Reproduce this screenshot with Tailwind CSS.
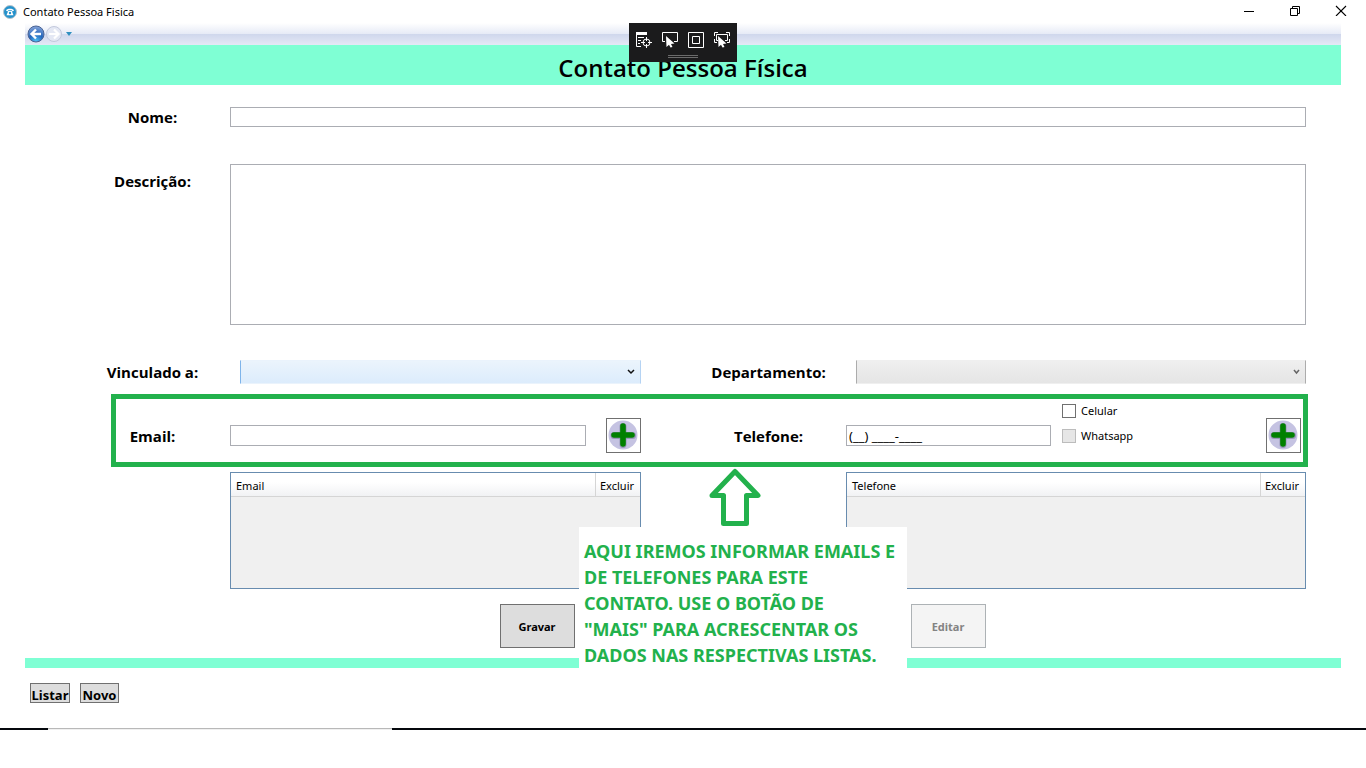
<!DOCTYPE html>
<html lang="pt-BR">
<head>
<meta charset="utf-8">
<title>Contato Pessoa Fisica</title>
<script src="https://cdn.jsdelivr.net/npm/@tailwindcss/browser@4"></script>
</head>
<body class="bg-white text-black text-[12px] leading-4 font-['Segoe_UI','Noto_Sans',sans-serif]">
<header class="flex h-[23px] items-center justify-between pr-[2px] pl-[3px]">
  <div class="flex items-center gap-[6px]">
    <svg width="14" height="14" viewBox="0 0 14 14" aria-hidden="true"><circle cx="7" cy="7" r="6.5" fill="#2492cc" stroke="#b8c4cc"/><path d="M3 5.5C3.500 3 10.500 3 11 5.500L9.500 6.500L8.500 5H5.500L4.500 6.500Z" fill="#fff"/><path d="M5.300 5.800H8.700L10.500 10.300H3.500Z" fill="#fff"/><circle cx="7" cy="8" r="1.200" fill="#2492cc"/></svg>
    <h1 class="text-[11px]">Contato Pessoa Fisica</h1>
  </div>
  <div class="flex h-5 items-start pt-[2px]">
    <button class="flex w-[46px] justify-center" aria-label="Minimizar"><svg width="12" height="12" fill="none" stroke="#000"><path d="M1 7.500H11"/></svg></button>
    <button class="flex w-[46px] justify-center" aria-label="Restaurar"><svg width="12" height="12" fill="none" stroke="#000"><path d="M1.500 4.500H8.500V11.500H1.500ZM3.500 4V2.500H10.500V9.500H9"/></svg></button>
    <button class="flex w-[46px] justify-center" aria-label="Fechar"><svg width="12" height="12" fill="none" stroke="#000" stroke-width="1.100"><path d="M1 2L11 12M11 2L1 12"/></svg></button>
  </div>
</header>

<main class="relative px-[25px]">
  <nav class="flex h-[22px] items-center bg-[linear-gradient(#ffffff_0px,#e6eaf6_11px,#cfd7ec_11px,#e5e8f6_22px)] pl-[2px]">
    <button aria-label="Voltar"><svg width="18" height="18" viewBox="0 0 18 18"><defs><radialGradient id="azul" cx=".5" cy=".95" r=".9"><stop offset="0" stop-color="#4fc0f5"/><stop offset=".5" stop-color="#2467bd"/><stop offset="1" stop-color="#7f9fd6"/></radialGradient></defs><circle cx="9" cy="9" r="8" fill="url(#azul)" stroke="#4a6494"/><path d="M14 9H5M9 4.500L4.500 9L9 13.500" fill="none" stroke="#fff" stroke-width="2.400"/></svg></button>
    <button aria-label="Avançar" disabled><svg width="18" height="18" viewBox="0 0 18 18"><circle cx="9" cy="9" r="7.500" fill="#e4e8f4" stroke="#c3c9dc"/><path d="M4 9H13M9 4.500L13.500 9L9 13.500" fill="none" stroke="#fff" stroke-width="2.200"/></svg></button>
    <button class="ml-[2px]" aria-label="Histórico"><svg width="8" height="6"><path d="M1 1H7L4 5Z" fill="#2f8fc0"/></svg></button>
  </nav>

  <h2 class="h-10 bg-[#7fffd4] pt-[4px] text-center text-[24px] leading-[38px] font-semibold font-['Comic_Sans_MS','Open_Sans',sans-serif]">Contato Pessoa Física</h2>

  <!-- Ferramentas de depuração -->
  <div class="absolute top-0 left-1/2 h-[39px] w-[108px] -translate-x-1/2 bg-[#1b1b1c]">
    <div class="flex justify-between px-[6px] pt-2">
      <button aria-label="Árvore visual"><svg width="18" height="18" fill="none" stroke="#fff"><path d="M1 2.500H12M1 1.500H12M1 3.500H12"/><path d="M1.500 4V15.500H6M3 6.500H9M3 9.500H6M3 12.500H5"/><circle cx="11.500" cy="11.500" r="3.500"/><path d="M11.500 6V10M11.500 13V17M6 11.500H10M13 11.500H17"/></svg></button>
      <button aria-label="Selecionar elemento"><svg width="18" height="18" fill="none" stroke="#fff"><path d="M4 10.500H1.500V1.500H16.500V10.500H13"/><path d="M5 5L13.500 12.500L10 13L11.500 16L9.500 16.500L8 13.800L5.500 16Z" fill="#fff" stroke="none"/></svg></button>
      <button aria-label="Adornos de layout"><svg width="18" height="18" fill="none" stroke="#fff"><path d="M1.500 1.500H16.500V16.500H1.500ZM5.500 5.500H12.500V12.500H5.500Z"/></svg></button>
      <button aria-label="Controlar foco"><svg width="18" height="18" fill="none" stroke="#fff"><path d="M1.500 5V1.500H5M13 1.500H16.500V5M1.500 8V11.500H4M16.500 8V11.500H14M5 9.500H3.500V3.500H14.500V9.500H12"/><path d="M5 5L13.500 12.500L10 13L11.500 16L9.500 16.500L8 13.800L5.500 16Z" fill="#fff" stroke="none"/></svg></button>
    </div>
    <div class="mx-auto mt-[6px] h-[3px] w-[30px] border-y border-[#6b6b6b]"></div>
  </div>

  <form class="pl-[50px]" onsubmit="return false">
    <div class="pr-[35px]">
      <div class="mt-[22px] grid grid-cols-[155px_1fr] items-center">
        <label for="nome" class="text-center text-[15px] leading-5 font-bold font-['Comic_Sans_MS','Open_Sans',sans-serif]">Nome:</label>
        <input id="nome" class="h-5 w-full border border-[#abadb3] px-1">
      </div>
      <div class="mt-[37px] grid grid-cols-[155px_1fr]">
        <label for="desc" class="pt-[7px] text-center text-[15px] leading-5 font-bold font-['Comic_Sans_MS','Open_Sans',sans-serif]">Descrição:</label>
        <textarea id="desc" class="block h-[161px] w-full resize-none border border-[#abadb3] px-1"></textarea>
      </div>

      <div class="mt-[35px] grid grid-cols-[155px_411fr_205px_460fr] items-center">
        <label for="vinc" class="text-center text-[15px] leading-5 font-bold font-['Comic_Sans_MS','Open_Sans',sans-serif]">Vinculado a:</label>
        <div class="relative ml-[10px]">
          <select id="vinc" class="block h-6 w-full appearance-none border border-y-[#eaf3fc] border-r-[#b5d3f3] border-l-[#7eb4ea] bg-linear-to-b from-[#ebf4fc] to-[#dcecfc]"><option></option></select>
          <svg class="pointer-events-none absolute top-[9px] right-[6px]" width="8" height="6" fill="none" stroke="#111" stroke-width="1.500"><path d="M1 1L4 4L7 1"/></svg>
        </div>
        <label for="dep" class="pl-[50px] text-center text-[15px] leading-5 font-bold font-['Comic_Sans_MS','Open_Sans',sans-serif]">Departamento:</label>
        <div class="relative ml-[10px]">
          <select id="dep" disabled class="block h-6 w-full appearance-none border border-x-[#acacac] border-y-[#efefef] bg-linear-to-b from-[#efefef] to-[#e5e5e5]"><option></option></select>
          <svg class="pointer-events-none absolute top-[9px] right-[6px]" width="7" height="6" fill="none" stroke="#666" stroke-width="1.500"><path d="M1 1L3.500 4L6 1"/></svg>
        </div>
      </div>

      <div class="relative mt-[10px] grid h-[73px] grid-cols-[155px_411fr_205px_460fr] items-center">
        <div class="pointer-events-none absolute inset-y-0 -right-[2px] left-9 border-[5px] border-[#22b14c]"></div>
        <label for="email" class="pt-[10px] text-center text-[15px] leading-5 font-bold font-['Comic_Sans_MS','Open_Sans',sans-serif]">Email:</label>
        <div class="flex items-center gap-5 pt-[10px]">
          <input id="email" type="email" class="h-[21px] min-w-0 flex-1 border border-[#abadb3] px-1">
          <button class="flex size-[35px] items-center justify-center border border-[#707070]" aria-label="Adicionar email"><svg width="31" height="31" viewBox="0 0 31 31"><circle cx="15" cy="15" r="14.500" fill="#c5c3e2"/><path d="M15 6.500V24.500M6 15.500H24.500" stroke="#9695b8" stroke-width="7" stroke-linecap="round"/><path d="M15 6V24M6 15H24" stroke="#008000" stroke-width="5.600" stroke-linecap="round"/></svg></button>
        </div>
        <label for="tel" class="pt-[10px] pl-[50px] text-center text-[15px] leading-5 font-bold font-['Comic_Sans_MS','Open_Sans',sans-serif]">Telefone:</label>
        <div class="flex items-center pt-[10px] pr-[5px]">
          <input id="tel" type="text" value="(__) ____-____" class="h-[21px] w-[205px] border border-[#abadb3] px-[2px] text-[13px]">
          <div class="ml-[11px] -mt-[25px] flex flex-col gap-[9px]">
            <label class="flex items-center gap-[5px] text-[11px]"><input type="checkbox" class="size-[14px] appearance-none border border-[#707070] bg-white">Celular</label>
            <label class="flex items-center gap-[5px] text-[11px]"><input type="checkbox" disabled class="size-[14px] appearance-none border border-[#bcbcbc] bg-[#e6e6e6]">Whatsapp</label>
          </div>
          <button class="ml-auto flex size-[35px] items-center justify-center border border-[#707070]" aria-label="Adicionar telefone"><svg width="31" height="31" viewBox="0 0 31 31"><circle cx="15" cy="15" r="14.500" fill="#c5c3e2"/><path d="M15 6.500V24.500M6 15.500H24.500" stroke="#9695b8" stroke-width="7" stroke-linecap="round"/><path d="M15 6V24M6 15H24" stroke="#008000" stroke-width="5.600" stroke-linecap="round"/></svg></button>
        </div>
      </div>

      <div class="mt-[5px] grid grid-cols-[411fr_205px_460fr] pl-[155px]">
        <div class="h-[117px] border border-[#688caf] bg-[#f0f0f0]">
          <table class="w-full border-separate border-spacing-0 text-[11px]">
            <thead><tr class="h-6 text-left"><th class="border-r border-b border-[#d5d5d5] bg-linear-to-b from-white from-40% to-[#f1f2f4] px-[5px] pt-[2px] font-normal">Email</th><th class="w-11 border-b border-[#d5d5d5] bg-linear-to-b from-white from-40% to-[#f1f2f4] pt-[2px] pl-1 font-normal">Excluir</th></tr></thead>
          </table>
        </div>
        <div class="col-start-3 h-[117px] border border-[#688caf] bg-[#f0f0f0]">
          <table class="w-full border-separate border-spacing-0 text-[11px]">
            <thead><tr class="h-6 text-left"><th class="border-r border-b border-[#d5d5d5] bg-linear-to-b from-white from-40% to-[#f1f2f4] px-[5px] pt-[2px] font-normal">Telefone</th><th class="w-11 border-b border-[#d5d5d5] bg-linear-to-b from-white from-40% to-[#f1f2f4] pt-[2px] pl-1 font-normal">Excluir</th></tr></thead>
          </table>
        </div>
      </div>

      <div class="mt-[15px] flex justify-center gap-[336px] pl-[104px] text-[11px] font-bold">
        <button class="h-11 w-[75px] border border-[#707070] bg-[#dddddd] pt-[2px]">Gravar</button>
        <button disabled class="h-11 w-[75px] border border-[#adb2b5] bg-[#f4f4f4] pt-[2px] text-[#838383]">Editar</button>
      </div>
    </div>
  </form>

  <div class="mt-[10px] h-[10px] bg-[#7fffd4]"></div>

  <!-- Seta e nota explicativa -->
  <svg class="absolute top-[445px] left-1/2 ml-[26px]" width="52" height="58" fill="#fff" stroke="#22b14c" stroke-width="5" stroke-linejoin="round"><path d="M26 3.500L49 27.500H37.500V55.500H14.500V27.500H3Z"/></svg>
  <p class="absolute top-[504px] left-1/2 -ml-[104px] w-[328px] bg-white pt-[11px] pb-[6px] pl-[5px] text-[18px] leading-[26px] font-bold text-[#22b14c]">AQUI IREMOS INFORMAR EMAILS E<br>DE TELEFONES PARA ESTE<br>CONTATO. USE O BOTÃO DE<br>"MAIS" PARA ACRESCENTAR OS<br>DADOS NAS RESPECTIVAS LISTAS.</p>
</main>

<footer>
  <div class="flex gap-[10px] pt-[15px] pl-[30px] text-[13px] font-bold">
    <button class="h-5 w-10 border border-[#707070] bg-[#dddddd] pt-[3px] leading-4">Listar</button>
    <button class="h-5 w-[39px] border border-[#707070] bg-[#dddddd] pt-[3px] leading-4">Novo</button>
  </div>
  <div class="mt-[25px] flex h-[2px]"><div class="w-12 bg-[#05080d]"></div><div class="w-[344px] border-t border-[#b8b8b8] bg-[#f0f0f0]"></div><div class="flex-1 bg-[#05080d]"></div></div>
</footer>
</body>
</html>
